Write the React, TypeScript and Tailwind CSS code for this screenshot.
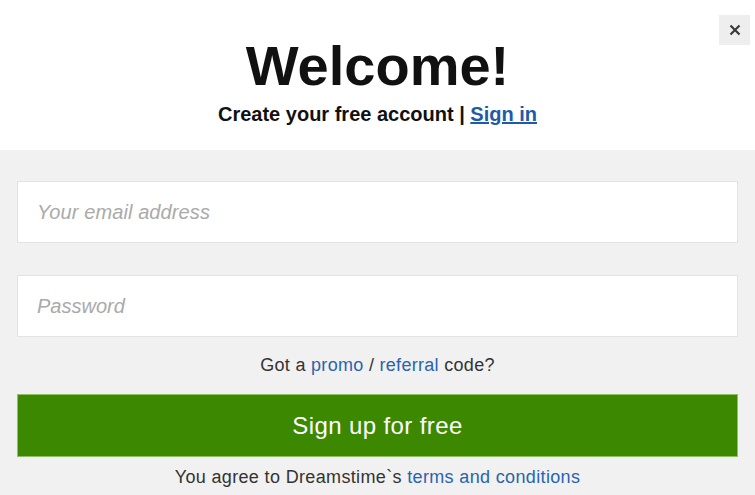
import React from "react";

export default function App() {
  return (
    <div className="w-[755px] h-[495px] bg-[#f1f1f1] overflow-hidden relative" style={{ fontFamily: '"Liberation Sans", Arial, sans-serif' }}>
      <div className="bg-white h-[150px] flex flex-col items-center pt-[36px]">
        <h1 className="text-[56px] leading-[60px] font-bold text-[#111]">Welcome!</h1>
        <p className="mt-[7px] text-[20px] leading-[22px] font-bold text-[#111]">
          Create your free account | <a className="text-[#1e5aa8] underline">Sign in</a>
        </p>
      </div>
      <button className="absolute right-[5px] top-[15px] w-[31px] h-[30px] bg-[#eeeeee] flex items-center justify-center">
        <svg width="12" height="12" viewBox="0 0 12 12">
          <path d="M1.5 1.5 L10.5 10.5 M10.5 1.5 L1.5 10.5" stroke="#3a3a3a" strokeWidth="2.2" />
        </svg>
      </button>
      <div className="px-[17px] pt-[31px] flex flex-col">
        <div className="h-[62px] bg-white border border-[#e3e3e3] flex items-center pl-[19px]">
          <span className="italic text-[20px] tracking-[0.1px] text-[#aaaaaa]">Your email address</span>
        </div>
        <div className="mt-[32px] h-[62px] bg-white border border-[#e3e3e3] flex items-center pl-[19px]">
          <span className="italic text-[20px] text-[#aaaaaa]">Password</span>
        </div>
        <p className="mt-[17px] text-center text-[18px] tracking-[0.3px] leading-[22px] text-[#333]">
          Got a <a className="text-[#2a63ad]">promo</a> / <a className="text-[#2a63ad]">referral</a> code?
        </p>
        <button className="mt-[18px] h-[63px] bg-[#3c8800] border border-[#8cc063] text-white text-[24px] tracking-[0.4px]">
          Sign up for free
        </button>
        <p className="mt-[9px] text-center text-[18px] tracking-[0.35px] leading-[22px] text-[#333]">
          You agree to Dreamstime`s <a className="text-[#2a63ad]">terms and conditions</a>
        </p>
      </div>
    </div>
  );
}
